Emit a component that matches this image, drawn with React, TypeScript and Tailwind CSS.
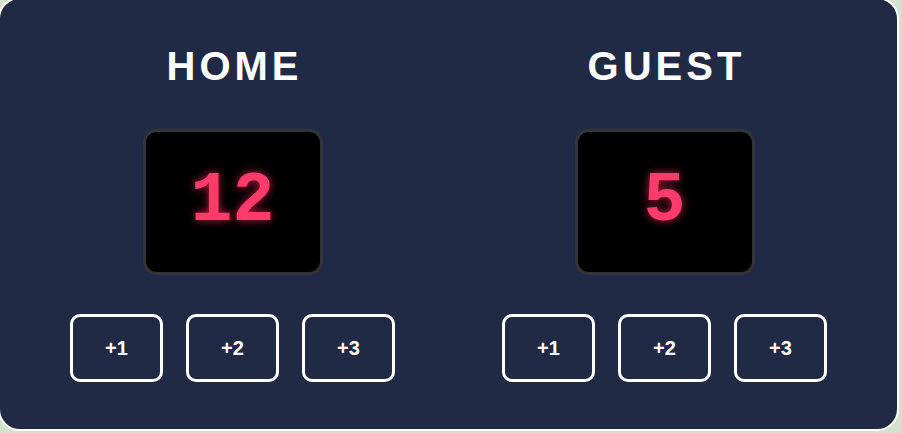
import React from "react";

function Team({ name, score }: { name: string; score: number }) {
  let buttons: any = [1, 2, 3];

  return (
    <div className="w-[325px] flex flex-col items-center">
      {/* Team name */}
      <h2 className="text-[40px] leading-none font-bold tracking-[4px] text-white font-['Liberation_Sans',Arial,sans-serif] pl-[4px]">
        {name}
      </h2>

      {/* Score box */}
      <div className="mt-[43px] w-[180px] h-[146px] bg-black border-[3px] border-[#333437] rounded-[14px] flex items-center justify-center">
        <span className="text-[70px] leading-none font-bold text-[#ff3b6b] font-['Liberation_Mono','Courier_New',monospace] [text-shadow:0_0_8px_rgba(255,40,90,0.75)]">
          {score}
        </span>
      </div>

      {/* Buttons */}
      <div className="mt-[39px] flex gap-[23px]">
        {buttons.map((n: any) => {
          return (
            <button
              key={n}
              className="w-[93px] h-[68px] border-[3px] border-white rounded-[10px] text-white text-[20px] font-bold font-['Liberation_Sans',Arial,sans-serif]"
            >
              +{n}
            </button>
          );
        })}
      </div>
    </div>
  );
}

function App() {
  return (
    <div className="w-[902px] h-[433px] bg-[#d4e1cf] overflow-hidden">
      <div className="-ml-[2px] -mt-[3px] w-[901px] h-[434px] bg-[#212a44] border-2 border-white rounded-[22px] flex justify-center gap-[107px] pt-[47px]">
        <Team name="HOME" score={12} />
        <Team name="GUEST" score={5} />
      </div>
    </div>
  );
}

export default App;
